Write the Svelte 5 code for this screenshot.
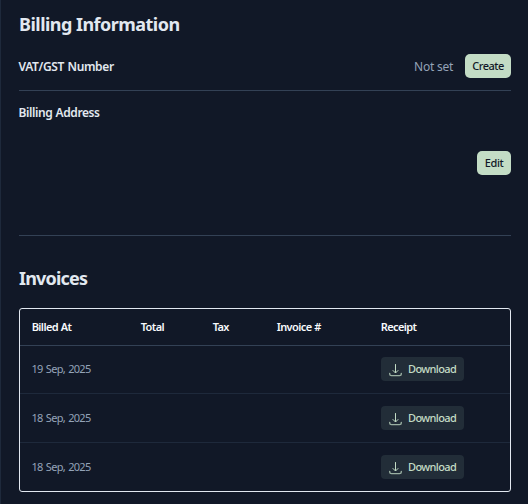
<script>
  const invoices = ['19 Sep, 2025', '18 Sep, 2025', '18 Sep, 2025'];
</script>

<main>
  <h2>Billing Information</h2>
  <section class="vat">
    <span class="label">VAT/GST Number</span>
    <span class="unset">Not set</span>
    <button class="solid create">Create</button>
  </section>
  <section class="address">
    <span class="label tight">Billing Address</span>
    <button class="solid edit">Edit</button>
  </section>
  <h2 class="second">Invoices</h2>
  <div class="table">
    <div class="row head">
      <span>Billed At</span><span>Total</span><span>Tax</span><span>Invoice #</span><span>Receipt</span>
    </div>
    {#each invoices as date}
      <div class="row">
        <span class="date">{date}</span><span></span><span></span><span></span>
        <button class="download">
          <svg width="14" height="14" viewBox="0 0 14 14" fill="none" stroke="currentColor" stroke-linecap="round" stroke-linejoin="round">
            <path d="M6.5 .5V8.5M4 6.5L6.5 9L9 6.5" />
            <path class="tray" d="M.7 9.5V10Q.7 11.6 2.5 11.6H10.5Q12.3 11.6 12.3 10V9.5" />
          </svg>
          <span>Download</span>
        </button>
      </div>
    {/each}
  </div>
</main>

<style>
  :global(body) { background: #111827; }
  main {
    box-sizing: border-box;
    height: 504px;
    border-left: 1px solid #1e293b;
    padding: 7px 17px 0 18px;
    background: #111827;
    font-family: "Noto Sans", "Open Sans", sans-serif;
    color: #e2e8f0;
    overflow: hidden;
    white-space: nowrap;
  }
  h2 { margin: 0; height: 35px; line-height: 34px; font-size: 18px; font-weight: 700; letter-spacing: -0.53px; }
  section { box-sizing: border-box; display: flex; border-bottom: 1px solid #334155; }
  .vat { height: 49px; align-items: center; }
  .label { flex: 1; font-size: 12px; line-height: 16px; font-weight: 600; letter-spacing: -0.36px; word-spacing: 0.7px; margin-left: -0.5px; }
  .vat .label { padding-top: 2px; }
  .tight { letter-spacing: -0.42px; }
  .unset { font-size: 12px; letter-spacing: -0.25px; color: #94a3b8; margin-right: 12px; padding-top: 1px; }
  button { box-sizing: border-box; height: 24px; border: 0; padding: 0; font-family: inherit; font-size: 11px; font-weight: 500; white-space: nowrap; }
  .solid { border-radius: 5px; background: #c3dcc5; color: #111827; padding-bottom: 1px; }
  .create { width: 46px; letter-spacing: -0.5px; }
  .edit { width: 34px; margin-top: 46px; letter-spacing: -0.4px; }
  .address { height: 145px; padding-top: 14px; align-items: flex-start; }
  .second { margin-top: 25px; height: 47px; letter-spacing: -0.8px; }
  .table { box-sizing: border-box; height: 184px; border: 1px solid #e2e8f0; border-radius: 3px; }
  .row { box-sizing: border-box; height: 49px; display: grid; grid-template-columns: 109px 72px 64px 104px 1fr; padding-left: 12px; align-items: center; border-bottom: 1px solid #1e293b; font-size: 11px; }
  .row > span { position: relative; top: -1px; left: -0.3px; }
  .row:nth-child(2) { height: 48px; }
  .row:nth-child(2) .download { margin-bottom: 1px; }
  .row:last-child { height: 48px; border: 0; }
  .head { height: 37px; border-color: #334155; font-weight: 600; letter-spacing: -0.6px; word-spacing: 0.5px; color: #f8fafc; }
  .row > .date { left: -0.5px; color: #94a3b8; letter-spacing: -0.7px; word-spacing: 1px; }
  .download { display: flex; align-items: center; width: 83px; padding-left: 8px; gap: 5px; border-radius: 4px; background: #222d38; color: #c3dcc5; }
  .download svg { position: relative; top: 2px; }
  .download span { position: relative; top: -1px; letter-spacing: -0.62px; }
  .tray { stroke-width: 1.4; opacity: 0.75; }
</style>
